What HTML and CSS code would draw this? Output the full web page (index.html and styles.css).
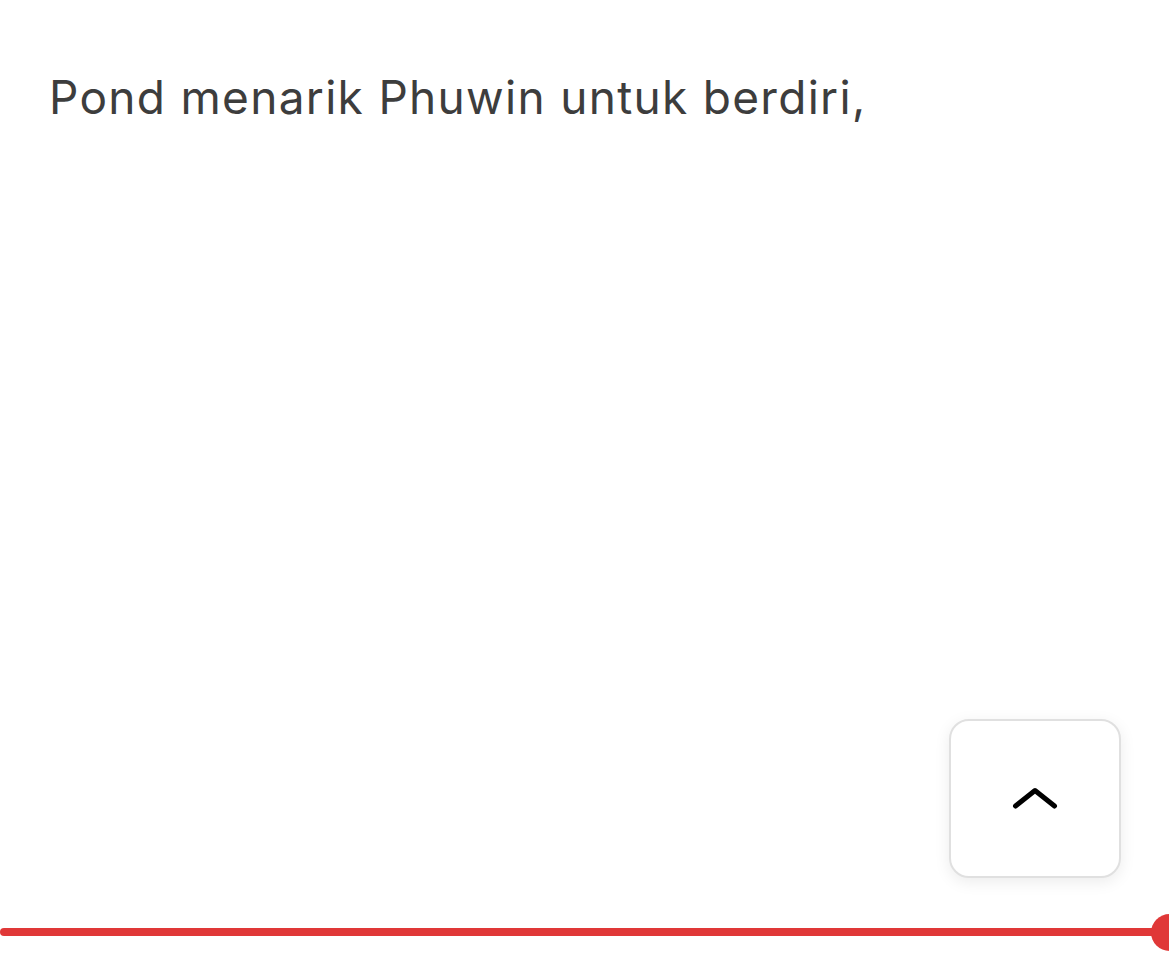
FILE: index.html
```html
<!DOCTYPE html>
<html lang="id">
<head>
<meta charset="utf-8">
<title>Bacaan</title>
<link rel="stylesheet" href="styles.css">
</head>
<body>
<main class="reader">
  <p class="story-line">Pond menarik Phuwin untuk berdiri,</p>
</main>
<button class="to-top" aria-label="Kembali ke atas">
  <svg width="46" height="26" viewBox="0 0 46 26" aria-hidden="true"><path d="M3.5 21 L23 5.5 L42.5 21" fill="none" stroke="#000" stroke-width="5" stroke-linecap="round" stroke-linejoin="round"/></svg>
</button>
<div class="progress"><div class="progress-bar"></div><div class="progress-knob"></div></div>
</body>
</html>
```
FILE: styles.css
```css
html, body {
  margin: 0;
  padding: 0;
  background: #fff;
}
body {
  font-family: Inter, "Noto Sans", sans-serif;
  color: #3d3d3d;
  height: 979px;
  overflow: hidden;
}
.reader {
  padding: 64px 49px 0;
}
.story-line {
  margin: 0;
  font-size: 46px;
  line-height: 66px;
  letter-spacing: 1.3px;
}
.to-top {
  position: fixed;
  left: 949px;
  top: 719px;
  width: 172px;
  height: 159px;
  box-sizing: border-box;
  background: #fff;
  border: 2px solid #e0e0e0;
  border-radius: 20px;
  box-shadow: 0 4px 16px rgba(0,0,0,0.08);
  display: flex;
  align-items: center;
  justify-content: center;
  padding: 0;
}
.to-top svg {
  display: block;
  margin-top: -2px;
}
.progress {
  position: fixed;
  left: 0;
  right: 0;
  top: 914px;
  height: 37px;
}
.progress-bar {
  position: absolute;
  left: 0;
  right: 0;
  top: 14px;
  height: 8px;
  border-radius: 4px;
  background: #e03838;
}
.progress-knob {
  position: absolute;
  left: 1151px;
  top: 0;
  width: 37px;
  height: 37px;
  border-radius: 50%;
  background: #e03838;
}
```
